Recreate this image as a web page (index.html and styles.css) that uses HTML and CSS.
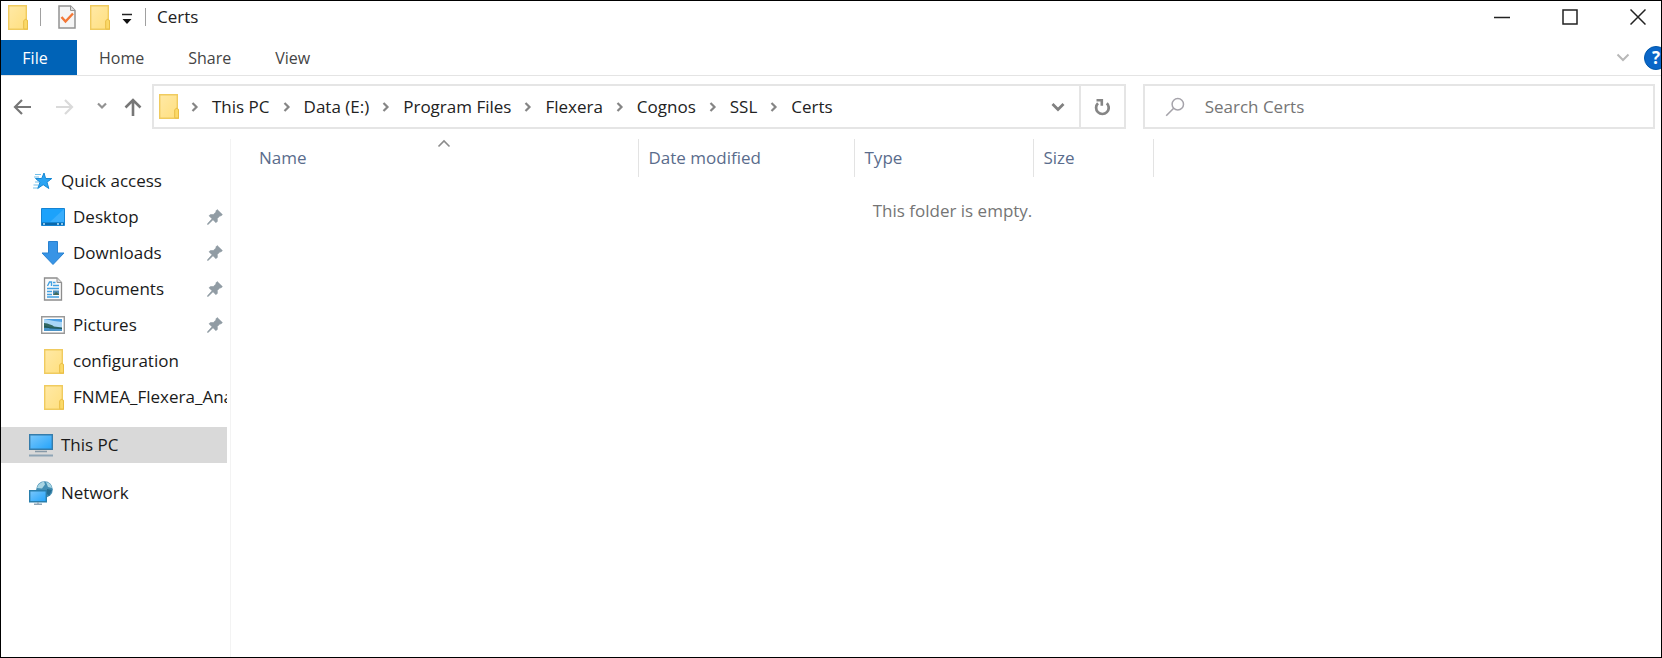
FILE: index.html
```html
<!DOCTYPE html>
<html lang="en">
<head>
<meta charset="utf-8">
<title>Certs</title>
<link rel="stylesheet" href="styles.css">
</head>
<body>
<svg class="defs" aria-hidden="true">
  <defs>
    <linearGradient id="gold" x2="1" y2="1"><stop stop-color="#ffe9a6"/><stop offset="1" stop-color="#ffdf7e"/></linearGradient>
    <linearGradient id="sky" x2="1" y2="1"><stop stop-color="#7cc8fb"/><stop offset="1" stop-color="#22a3fb"/></linearGradient>
    <symbol id="folder" viewBox="0 0 20 25">
      <path d="M.7.7h17.6v14l1 1v8.600H.7z" fill="url(#gold)" stroke="#f0cb5f" stroke-width="1.400"/>
      <path d="M15.700 23.500v-7.500l1.300-1.700h1.300l1.200 1.700v8h-3.800z" fill="#fbd968" stroke="#e9bd45"/>
    </symbol>
    <symbol id="crumb" viewBox="0 0 8 12"><path d="M1.500 2 5.500 6l-4 4" fill="none" stroke="#858585" stroke-width="2.200"/></symbol>
    <symbol id="pin" viewBox="0 0 16 16"><path d="M10.200.6 15.400 5.600 13.900 7 13 6.800 10.300 9.600 10.400 12.300 9 13.700 6 10.800 1.400 15.200.5 15.500.7 14.500 5 9.800 2 6.800 3.500 5.500 6.300 5.600 9 2.900 8.800 2z" fill="#919ca4" stroke="#919ca4" stroke-width=".6"/></symbol>
  </defs>
</svg>
<div class="window">
  <header class="titlebar">
    <svg class="folder" aria-hidden="true"><use href="#folder"/></svg>
    <span class="rule"></span>
    <button class="plain check" aria-label="Properties"><svg width="18" height="24" viewBox="0 0 18 24"><path d="M1 1h11.500L17 5.500V23H1z" fill="#f5f5f5" stroke="#929292" stroke-width="1.500"/><path d="M12.500 1v4.500H17" fill="#ddd" stroke="#929292"/><path d="m3.500 12 4 4.500 7.500-8" fill="none" stroke="#f37736" stroke-width="2.400"/></svg></button>
    <button class="plain" aria-label="New folder"><svg class="folder"><use href="#folder"/></svg></button>
    <button class="plain customize" aria-label="Customize Quick Access Toolbar"><svg width="12" height="14" viewBox="0 0 12 14"><path d="M1 4.500h10" stroke="#222" stroke-width="1.500"/><path d="M1.500 9h9L6 14z" fill="#111"/></svg></button>
    <span class="rule"></span>
    <h1>Certs</h1>
    <div class="controls">
      <button class="plain" aria-label="Minimize"><svg width="16" height="16"><path d="M0 8.500h16" stroke="#222" stroke-width="1.500"/></svg></button>
      <button class="plain" aria-label="Maximize"><svg width="16" height="16"><path d="M1 1h14v14H1z" fill="none" stroke="#222" stroke-width="1.500"/></svg></button>
      <button class="plain" aria-label="Close"><svg width="16" height="16"><path d="m.5.5 15 15m0-15-15 15" stroke="#222" stroke-width="1.500"/></svg></button>
    </div>
  </header>
  <div class="ribbon">
    <button class="tab file">File</button>
    <button class="tab">Home</button>
    <button class="tab">Share</button>
    <button class="tab">View</button>
    <button class="plain expand" aria-label="Expand the Ribbon"><svg width="14" height="9" viewBox="0 0 14 9"><path d="m1.500 1.500 5.500 5.500 5.500-5.500" fill="none" stroke="#b8b8b8" stroke-width="2"/></svg></button>
    <button class="help" aria-label="Help">?</button>
  </div>
  <div class="navbar">
    <div class="history">
      <button class="plain" aria-label="Back"><svg width="19" height="16" viewBox="0 0 19 16"><path d="M18 8H2M9 1 2 8l7 7" fill="none" stroke="#777" stroke-width="2.200"/></svg></button>
      <button class="plain" aria-label="Forward"><svg width="19" height="16" viewBox="0 0 19 16"><path d="M1 8h16M10 1l7 7-7 7" fill="none" stroke="#dadada" stroke-width="2.200"/></svg></button>
      <button class="plain" aria-label="Recent locations"><svg width="10" height="16" viewBox="0 0 10 16"><path d="m1 4.500 4 4 4-4" fill="none" stroke="#929292" stroke-width="2.200"/></svg></button>
      <button class="plain" aria-label="Up"><svg width="18" height="18" viewBox="0 0 18 18"><path d="M9 18V2M1.500 9.500 9 2l7.500 7.500" fill="none" stroke="#777" stroke-width="2.600"/></svg></button>
    </div>
    <nav class="address" aria-label="Address">
      <svg class="folder" aria-hidden="true"><use href="#folder"/></svg>
      <ol class="crumbs">
        <li><svg><use href="#crumb"/></svg><a href="#">This PC</a></li>
        <li><svg><use href="#crumb"/></svg><a href="#">Data (E:)</a></li>
        <li><svg><use href="#crumb"/></svg><a href="#">Program Files</a></li>
        <li><svg><use href="#crumb"/></svg><a href="#">Flexera</a></li>
        <li><svg><use href="#crumb"/></svg><a href="#">Cognos</a></li>
        <li><svg><use href="#crumb"/></svg><a href="#">SSL</a></li>
        <li><svg><use href="#crumb"/></svg><a href="#">Certs</a></li>
      </ol>
      <button class="plain drop" aria-label="Previous locations"><svg width="14" height="10" viewBox="0 0 14 10"><path d="m1.500 2 5.500 5.500L12.500 2" fill="none" stroke="#808080" stroke-width="2.800"/></svg></button>
      <button class="plain refresh" aria-label="Refresh"><svg width="16" height="18" viewBox="0 0 16 18"><path d="M12.800 5.200A6.300 6.300 0 1 1 4 5.200" fill="none" stroke="#858585" stroke-width="2.700"/><path d="M2.500 2.200h5.300v5.500" fill="none" stroke="#858585" stroke-width="2.600"/></svg></button>
    </nav>
    <label class="search">
      <svg width="20" height="20" viewBox="0 0 20 20" aria-hidden="true"><circle cx="12.800" cy="7.200" r="5.700" fill="none" stroke="#a5a3aa" stroke-width="1.500"/><path d="m8.700 11.300-7.500 7.500" stroke="#a5a3aa" stroke-width="1.600"/></svg>
      <input type="text" placeholder="Search Certs" aria-label="Search Certs">
    </label>
  </div>
  <div class="body">
    <nav class="sidebar" aria-label="Navigation pane">
      <ul>
        <li><a class="root quick" href="#"><svg width="24" height="20" viewBox="0 0 24 20"><path d="m14 2 1.600 5.500h6.200l-4.800 3.700 1.800 6.300-5.600-3.800-5.500 3.800 2.300-6.300L5.500 7.500h6.200z" fill="#2ba4f3" stroke="#1688d4"/><path d="M5 3.500h6M4 6h5M5 11h4M3.500 14h5M3 17h5" stroke="#72bfe9" stroke-width="1.200"/></svg><span>Quick access</span></a></li>
        <li><a href="#"><svg width="24" height="24" viewBox="0 0 24 24"><path d="M.5 3.500h23v17H.5z" fill="#1ca2fb" stroke="#1683d2"/><path d="M23 4v13L9 17z" fill="#39aefd"/><path d="M1 17.500h22V20H1z" fill="#0b68aa"/><path d="M2 19h2m12 0h2m2 0h2" stroke="#b7e3ff" stroke-width="1.500"/></svg><span>Desktop</span><svg class="pin"><use href="#pin"/></svg></a></li>
        <li><a href="#"><svg width="24" height="24" viewBox="0 0 24 24"><path d="M7.500.5h9V12H23L12 23.500 1 12h6.500z" fill="#3794e6" stroke="#2881d0"/></svg><span>Downloads</span><svg class="pin"><use href="#pin"/></svg></a></li>
        <li><a href="#"><svg width="24" height="24" viewBox="0 0 24 24"><path d="M3.500 1H16l4.500 4.500V23h-17z" fill="#fafafa" stroke="#8d8d8d" stroke-width="1.300"/><path d="M16 1v4.500h4.500" fill="#ddd" stroke="#929292"/><path d="m6.500 9 2-4h2v4M12 5.500h2.500M12 8.500h6M6 11.500h12M6 14.500h5M6 17.500h5M6 20h12" fill="none" stroke="#42a1e2" stroke-width="1.400"/><path d="M12 13.500h6V18h-6z" fill="#4f8db7"/><path d="m12 18 3-3 3 2v1z" fill="#426a59"/></svg><span>Documents</span><svg class="pin"><use href="#pin"/></svg></a></li>
        <li><a href="#"><svg width="24" height="24" viewBox="0 0 24 24"><path d="M.7 3.700h22.600v16.600H.7z" fill="#fff" stroke="#999" stroke-width="1.400"/><path d="M3 6h18v12H3z" fill="#a9d6f7"/><path d="M3 6h18v3l-8-1z" fill="#4b9fe3"/><path d="M3 10q7 1 10 3.500l8 1v1H3z" fill="#33675f"/><path d="M3 15h18v3H3z" fill="#4a94c8"/><path d="m3 13 6 2 12 .5" fill="none" stroke="#195660"/></svg><span>Pictures</span><svg class="pin"><use href="#pin"/></svg></a></li>
        <li><a href="#"><svg width="24" height="25" viewBox="-3 0 24 25"><use href="#folder" width="20" height="25"/></svg><span>configuration</span></a></li>
        <li><a href="#"><svg width="24" height="25" viewBox="-3 0 24 25"><use href="#folder" width="20" height="25"/></svg><span>FNMEA_Flexera_Analytics</span></a></li>
      </ul>
      <a class="root selected" href="#" aria-current="page"><svg width="24" height="24" viewBox="0 0 24 24"><path d="M.7 1.700h22.600v14.600H.7z" fill="url(#sky)" stroke="#357cab" stroke-width="1.400"/><path d="M6 18.500h12" stroke="#8799a7" stroke-width="1.500"/><path d="M0 22.500h24" stroke="#8ea4b5" stroke-width="2"/></svg><span>This PC</span></a>
      <a class="root" href="#"><svg width="24" height="24" viewBox="0 0 24 24"><circle cx="15.500" cy="8.500" r="8.300" fill="#438eb3"/><path d="M8 7q1-5 7-6.500l1 3-3 4zM17 1q5 1 6 6l-4-1z" fill="#a9d5e3"/><path d="m18 8 5 1-3 6-2-2z" fill="#246d92"/><path d="M.7 9.700h16.600v11H.7z" fill="url(#sky)" stroke="#297eac" stroke-width="1.400"/><path d="M9 21v2m-4 .3h8" stroke="#8ea4b5" stroke-width="1.400"/></svg><span>Network</span></a>
    </nav>
    <main>
      <table>
        <colgroup><col class="c-name"><col class="c-date"><col class="c-type"><col class="c-size"></colgroup>
        <thead><tr>
          <th class="sorted" scope="col" aria-sort="ascending">Name<svg class="caret" width="14" height="9" viewBox="0 0 14 9"><path d="M1.500 7.500 7 2l5.500 5.500" fill="none" stroke="#8b8b8b" stroke-width="1.600"/></svg></th>
          <th scope="col">Date modified</th><th scope="col">Type</th><th scope="col">Size</th>
        </tr></thead>
      </table>
      <p class="empty">This folder is empty.</p>
    </main>
  </div>
</div>
</body>
</html>
```
FILE: styles.css
```css
* { box-sizing: border-box; }
body { margin: 0; background: #fff; color: #222; font: 17px/24px "Open Sans", "Noto Sans", sans-serif; }
button, input { font: inherit; color: inherit; }
a { color: inherit; text-decoration: none; }
svg { display: block; flex: none; }
ul, ol { list-style: none; margin: 0; padding: 0; }
.defs { position: absolute; width: 0; height: 0; }
.window { min-height: 100vh; border: 1px solid #000; display: flex; flex-direction: column; overflow: hidden; }
.plain { border: 0; padding: 0; background: none; display: flex; align-items: center; justify-content: center; flex: none; }
.folder { width: 20px; height: 25px; }

.titlebar { display: flex; align-items: center; height: 39px; padding: 0 15px 7px 7px; }
.rule { width: 1px; height: 18px; margin: 0 17px 0 12px; background: #a0a0a0; }
.check { margin-right: 14px; }
.customize { margin-left: 11px; }
.titlebar h1 { margin: 0; font-size: 17px; font-weight: 400; }
.customize + .rule { margin-right: 11px; }
.controls { display: flex; gap: 52px; margin-left: auto; }

.ribbon { display: flex; align-items: center; height: 36px; border-bottom: 1px solid #e4e4e4; }
.tab { border: 0; background: none; color: #444; font-size: 16px; padding: 0 22px; height: 35px; }
.file { width: 76px; padding: 0 8px 0 0; background: #0063b7; color: #fff; }
.expand { margin-left: auto; }
.help { width: 24px; height: 24px; flex: none; margin: 0 -7px 0 14px; border: 1px solid #0057aa; border-radius: 50%; padding: 0; background: #0a66c8; color: #fff; font-weight: 700; line-height: 22px; }

.navbar { display: grid; grid-template-columns: 139px minmax(0, 973fr) minmax(0, 529fr); padding: 8px 6px 0 12px; }
.history { display: flex; align-items: center; gap: 23px; }
.history button:nth-child(4) { margin-left: -6px; }
.address { display: flex; align-items: center; height: 45px; border: 2px solid #e5e5e5; padding-left: 5px; }
.crumbs { display: flex; flex: 1; padding-left: 12px; }
.crumbs li { display: flex; align-items: center; }
.crumbs svg { width: 8px; height: 12px; }
.crumbs a { padding: 0 13px; }
.drop { width: 42px; align-self: stretch; }
.refresh { width: 45px; align-self: stretch; border-left: 2px solid #e5e5e5; }
.search { display: flex; align-items: center; gap: 20px; margin-left: 17px; padding-left: 20px; border: 2px solid #e5e5e5; }
.search input { flex: 1; min-width: 0; border: 0; padding: 0; outline: 0; background: none; }
.search input::placeholder { color: #757575; opacity: 1; }

.body { display: flex; flex: 1; padding-top: 10px; }
.sidebar { width: 230px; padding: 24px 3px 0 0; border-right: 1px solid #f3f3f3; color: #1a1a1a; }
.sidebar a { display: flex; align-items: center; gap: 8px; height: 36px; padding-left: 40px; overflow: hidden; white-space: nowrap; }
.sidebar .root { padding-left: 28px; }
.sidebar .quick { padding-left: 29px; gap: 7px; }
.sidebar ul { margin-bottom: 12px; }
.sidebar .selected { background: #d9d9d9; margin-bottom: 12px; }
.pin { width: 16px; height: 16px; margin: 0 4px 0 auto; }

main { flex: 1; padding-left: 18px; }
table { border-collapse: collapse; table-layout: fixed; width: 904px; }
.c-name { width: 389px; }
.c-date { width: 216px; }
.c-type { width: 179px; }
.c-size { width: 120px; }
th { height: 38px; padding: 0 0 0 10px; border-right: 1px solid #e3e3e3; text-align: left; font-weight: 400; color: #5a6c8c; }
.sorted { position: relative; }
.caret { position: absolute; top: 0; left: 50%; margin-left: -6px; }
.empty { margin: 22px 50px 0 45px; text-align: center; color: #757575; }
```
